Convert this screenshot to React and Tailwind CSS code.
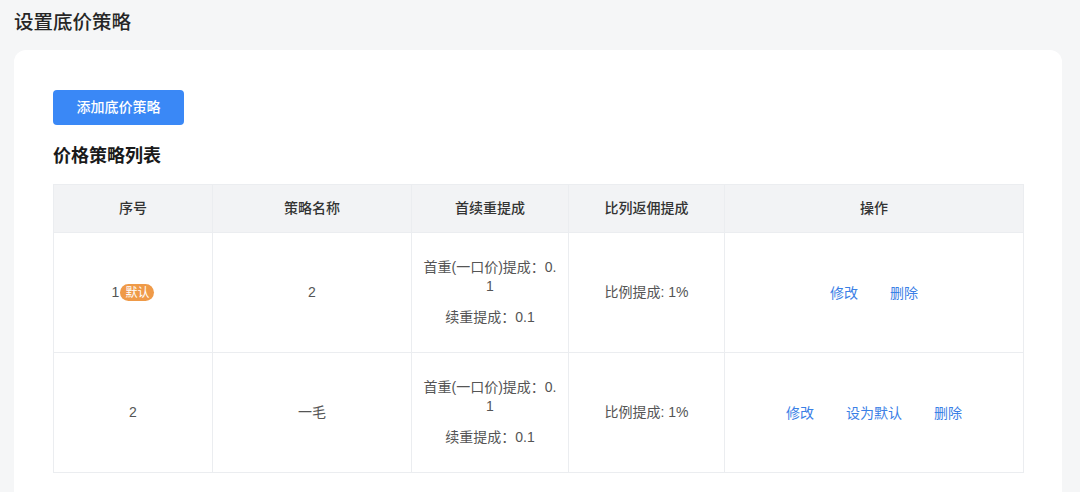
import React from 'react';

const font = { fontFamily: '"Liberation Sans", "Noto Sans CJK SC", sans-serif' };

const columns = [
    { key: 'index', title: '序号', width: 'w-[159px]' },
    { key: 'name', title: '策略名称', width: 'w-[199px]' },
    { key: 'weight', title: '首续重提成', width: 'w-[157px]' },
    { key: 'ratio', title: '比列返佣提成', width: 'w-[156px]' },
    { key: 'ops', title: '操作', width: 'w-[299px]' },
];

const rows = [
    { id: 1, name: '2', first: '0.1', next: '0.1', ratio: '1%', isDefault: true },
    { id: 2, name: '一毛', first: '0.1', next: '0.1', ratio: '1%', isDefault: false },
];

const ActionLink = ({ children }) => (
    <button className="text-[14px] text-[#3a80e6] leading-5 cursor-pointer">{children}</button>
);

export default function App() {
    return (
        <div className="min-h-screen bg-[#f5f6f7] pl-[14px] pt-2" style={font}>
            <h1 className="text-[19.5px] leading-7 font-medium text-[#262626]">设置底价策略</h1>

            <div className="mt-[14px] w-[1048px] bg-white rounded-t-xl px-[39px] pt-10 pb-8">
                <button className="w-[131px] h-[35px] rounded bg-[#3a88f6] text-white text-[14px] font-medium">
                    添加底价策略
                </button>

                <h2 className="mt-[18px] mb-[15px] text-[18px] leading-[26px] font-bold text-[#1a1a1a]">
                    价格策略列表
                </h2>

                <table className="w-[970px] table-fixed border-collapse text-[14px]">
                    <thead>
                        <tr className="h-12 bg-[#f2f3f5]">
                            {columns.map(col => (
                                <th
                                    key={col.key}
                                    className={`${col.width} border border-[#ebedf0] font-medium text-[#333]`}
                                >
                                    {col.title}
                                </th>
                            ))}
                        </tr>
                    </thead>
                    <tbody className="text-[#555]">
                        {rows.map(row => (
                            <tr key={row.id} className="h-[120px]">
                                <td className="border border-[#ebedf0] text-center">
                                    <span className="inline-flex items-center">
                                        {row.id}
                                        {row.isDefault && (
                                            <span className="ml-px inline-flex items-center h-[17px] px-[5px] rounded-full bg-[#ef9a48] text-white text-[12px] leading-none">
                                                默认
                                            </span>
                                        )}
                                    </span>
                                </td>
                                <td className="border border-[#ebedf0] text-center">{row.name}</td>
                                <td className="border border-[#ebedf0] text-center px-[10px] break-all">
                                    <p className="leading-[19px]">首重(一口价)提成：{row.first}</p>
                                    <p className="mt-3 leading-[19px]">续重提成：{row.next}</p>
                                </td>
                                <td className="border border-[#ebedf0] text-center">比例提成: {row.ratio}</td>
                                <td className="border border-[#ebedf0]">
                                    <div className="flex justify-center gap-8">
                                        <ActionLink>修改</ActionLink>
                                        {!row.isDefault && <ActionLink>设为默认</ActionLink>}
                                        <ActionLink>删除</ActionLink>
                                    </div>
                                </td>
                            </tr>
                        ))}
                    </tbody>
                </table>
            </div>
        </div>
    );
}
